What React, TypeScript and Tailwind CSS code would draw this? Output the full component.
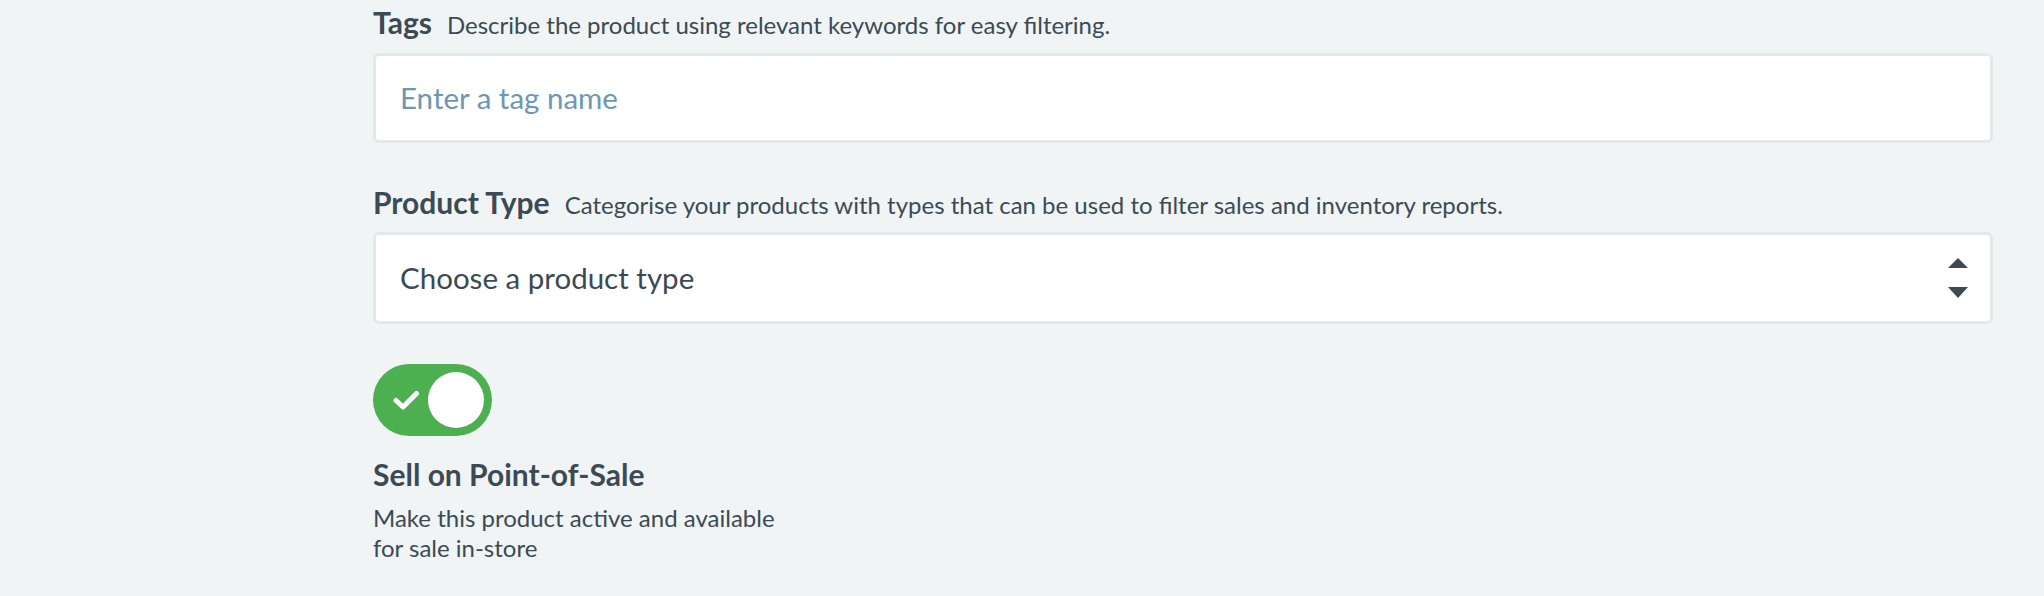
import { useState } from 'react';

const TEXT = 'text-[#3b4a54]';

function FieldLabel({ title, hint }: { title: string; hint: string }) {
  return (
    <div className="flex items-baseline gap-[15px] h-[36px]">
      <span className={`text-[30px] leading-[36px] font-bold ${TEXT}`}>{title}</span>
      <span className={`text-[24px] leading-[28px] ${TEXT}`}>{hint}</span>
    </div>
  );
}

function Toggle({ on, onChange }: { on: boolean; onChange: (v: boolean) => void }) {
  return (
    <button
      type="button"
      onClick={() => onChange(!on)}
      className={`relative w-[119px] h-[72px] rounded-full p-[8px] flex items-center cursor-pointer border-none ${on ? 'bg-[#4caf50] justify-end' : 'bg-[#c9d2d8] justify-start'}`}
    >
      {on && (
        <svg className="absolute left-[20px] top-[25px]" width="27" height="22" viewBox="0 0 27 22" fill="none">
          <path d="M3 11.5 L10 18 L23.5 4.5" stroke="#ffffff" strokeWidth="5" strokeLinecap="round" strokeLinejoin="round" />
        </svg>
      )}
      <span className="w-[56px] h-[56px] rounded-full bg-white block" />
    </button>
  );
}

export default function App() {
  const [tag, setTag] = useState('');
  const [sell, setSell] = useState(true);

  return (
    <div className="min-h-screen w-full bg-[#f0f4f5] pl-[373px] pr-[51px] pt-[4px]" style={{ fontFamily: 'Lato, "Open Sans", sans-serif' }}>
      <FieldLabel title="Tags" hint="Describe the product using relevant keywords for easy filtering." />
      <div className="mt-[13px] h-[90px] rounded-[6px] border-[3px] border-[#e3e8eb] bg-white flex items-center px-[24px]">
        <input
          value={tag}
          onChange={(e) => setTag(e.target.value)}
          placeholder="Enter a tag name"
          className={`w-full bg-transparent outline-none text-[29.5px] ${TEXT} placeholder:text-[#6c97b5]`}
        />
      </div>

      <div className="mt-[41px]">
        <FieldLabel
          title="Product Type"
          hint="Categorise your products with types that can be used to filter sales and inventory reports."
        />
      </div>
      <div className="mt-[12px] h-[92px] rounded-[6px] border-[3px] border-[#e3e8eb] bg-white flex items-center justify-between pl-[24px] pr-[22px]">
        <span className={`text-[29.5px] ${TEXT}`}>Choose a product type</span>
        <svg width="20" height="40" viewBox="0 0 20 40" className="block">
          <path d="M10 0 L20 10 L0 10 Z" fill="#3b4a54" />
          <path d="M0 29 L20 29 L10 40 Z" fill="#3b4a54" />
        </svg>
      </div>

      <div className="mt-[40px]">
        <Toggle on={sell} onChange={setSell} />
      </div>
      <div className={`mt-[20px] text-[30px] leading-[36px] font-bold ${TEXT}`}>Sell on Point-of-Sale</div>
      <p className={`mt-[11px] text-[24px] leading-[30px] ${TEXT}`}>
        Make this product active and available
        <br />
        for sale in-store
      </p>
    </div>
  );
}
